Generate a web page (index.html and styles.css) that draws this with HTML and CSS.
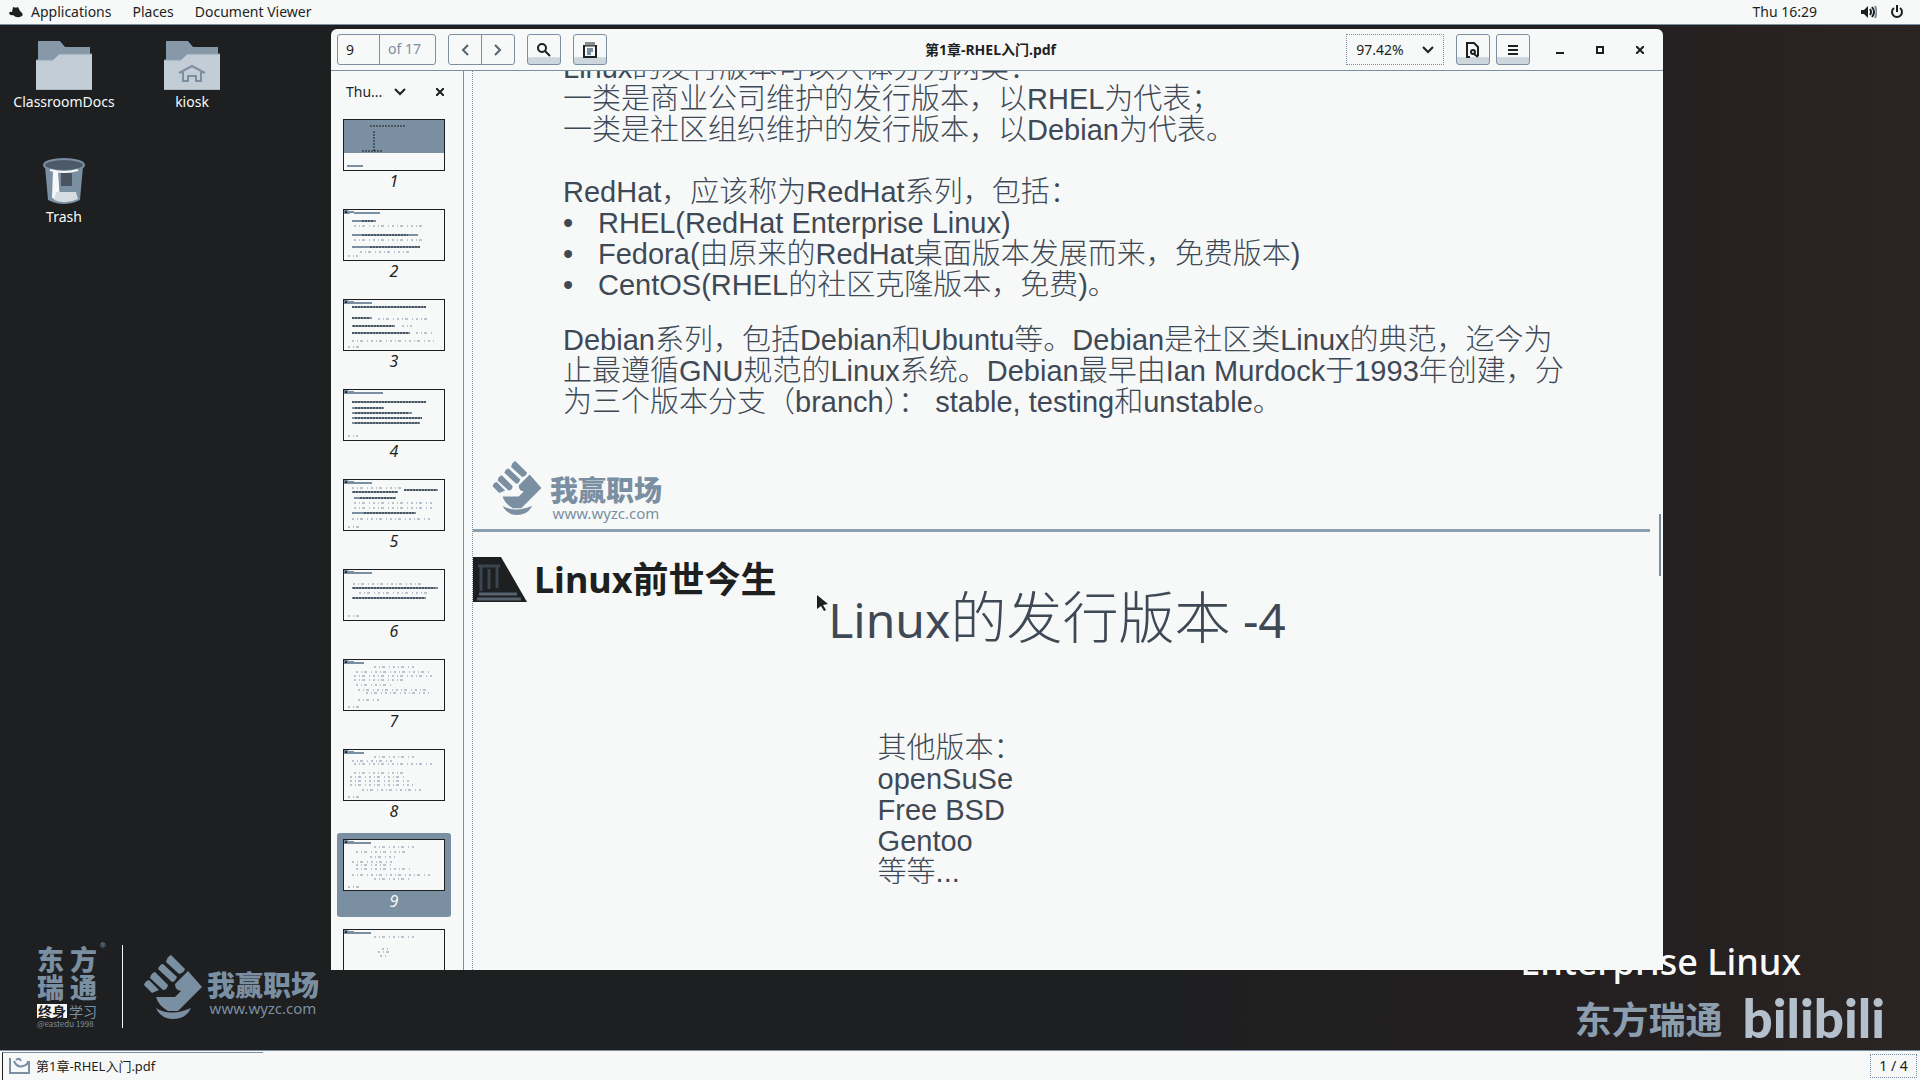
FILE: index.html
```html
<!DOCTYPE html>
<html lang="zh-CN">
<head>
<meta charset="utf-8">
<title>第1章-RHEL入门.pdf</title>
<link rel="stylesheet" href="styles.css">
</head>
<body>
<svg class="defs" aria-hidden="true">
  <symbol id="folder" viewBox="0 0 56 49">
    <path d="M2 0h22l5 6h25v16H2z" fill="#8798a9"/>
    <path d="M0 19h17l6-6h33v36H0z" fill="#c3cdd6"/>
    <path d="M0 19h17l6-6h33M0 49h56" fill="none" stroke="#8fa0b0"/>
  </symbol>
  <symbol id="fist" viewBox="0 0 58 64">
    <g fill="#7b8fa2">
      <path d="M27 0 41 14Q40 18 35 19L22 7Q23 2 27 0z"/>
      <path d="M19 9 33 22Q31 27 28 27L14 14Q16 9 19 9z"/>
      <path d="M11 17 24 30Q23 35 19 35L6 23Q7 18 11 17z"/>
      <path d="M5 25 15 35 8 38 0 30Q1 26 5 25z"/>
      <path d="M44 16 58 32 34 56H24Q14 50 12 42H31L37 36 47 29 38 36Q31 36 31 29z"/>
      <path d="M12 53Q26 62 47 53Q42 64 29 64Q17 64 12 53z"/>
    </g>
  </symbol>
  <symbol id="corner" viewBox="0 0 10 4"><path d="M0 0h3l2 4H0z" fill="#1e1f21"/><path d="M5 2h5" stroke="#7b8fa2" stroke-width="2"/></symbol>
</svg>

<header class="topbar">
  <nav class="menus">
    <svg width="16" height="14" viewBox="0 0 16 14"><path d="M1 8Q2 6 4 7L5 2Q8 3 10 2L12 6Q16 9 14 11Q9 14 5 10Q2 11 1 8z" fill="#1e1f21"/></svg>
    <button class="menu">Applications</button>
    <button class="menu">Places</button>
    <button class="menu">Document Viewer</button>
  </nav>
  <div class="status">
    <span>Thu 16:29</span>
    <button class="tray" aria-label="System">
      <svg width="16" height="14" viewBox="0 0 16 14" fill="none" stroke="#1e1f21" stroke-width="2"><path d="M0 5h3l4-4v12L3 9H0z" fill="#1e1f21" stroke="none"/><path d="M9 4q2 3 0 6M11 2q4 5 0 10"/><path d="M14 1q3 6 0 12" stroke="#7b8fa2"/></svg>
      <svg width="14" height="14" viewBox="0 0 14 14" fill="none" stroke="#1e1f21" stroke-width="2"><path d="M4 3a5 5 0 1 0 6 0M7 0v7"/></svg>
    </button>
  </div>
</header>

<main class="desktop">
  <div class="shortcuts">
    <a class="shortcut" href="#"><svg width="56" height="49"><use href="#folder"/></svg>ClassroomDocs</a>
    <a class="shortcut" href="#"><svg width="56" height="49" viewBox="0 0 56 49"><use href="#folder"/><path d="M15 32 28 25 41 32M19 31v9h5v-5h8v5h5v-9" fill="none" stroke="#7b8fa2" stroke-width="2"/></svg>kiosk</a>
    <a class="shortcut" href="#"><svg width="56" height="49" viewBox="0 0 56 49"><path d="M9 10 12 44Q28 52 44 44L47 10z" fill="#7b8fa2"/><path d="M17 15h5l2 30-8-3z" fill="#f7f9f9"/><path d="M25 17h11v13H25z" fill="#4a5460"/><path d="M20 36h20l2 7Q30 49 18 44z" fill="#d5dce2"/><ellipse cx="28" cy="9" rx="20" ry="6" fill="#4d5966" stroke="#7b8fa2" stroke-width="2"/><path d="M14 14q14 4 28 0" stroke="#f7f9f9" stroke-width="2" fill="none"/></svg>Trash</a>
  </div>

  <div class="wallpaper-name">Enterprise Linux</div>

  <section class="window">
    <div class="toolbar">
      <div class="tools">
        <div class="pager"><input class="page-no" value="9" aria-label="Page"><span class="page-of">of 17</span></div>
        <div class="pair">
          <button aria-label="Previous"><svg width="8" height="12" viewBox="0 0 8 12"><path d="M7 1 2 6l5 5"/></svg></button>
          <button aria-label="Next"><svg width="8" height="12" viewBox="0 0 8 12"><path d="M1 1l5 5-5 5"/></svg></button>
        </div>
        <button class="tool" aria-label="Find"><svg width="16" height="16" viewBox="0 0 16 16"><circle cx="6" cy="6" r="4"/><path d="M9 9l5 5"/></svg></button>
        <button class="tool" aria-label="Annotate"><svg width="14" height="16" viewBox="0 0 14 16"><path d="M1 3v12h12V3"/><path d="M1 4h12M3 0v4M5 0v4M7 0v4M9 0v4M11 0v4" stroke-width="1"/><path d="M4 6h6v4H8v3H4z" fill="#7b8fa2" stroke="none"/></svg></button>
      </div>
      <h1 class="title">第1章-RHEL入门.pdf</h1>
      <div class="tools tools-end">
        <button class="zoom">97.42%<svg width="12" height="8" viewBox="0 0 12 8"><path d="M1 1l5 5 5-5"/></svg></button>
        <div class="actions">
          <button class="tool" aria-label="Document"><svg width="14" height="16" viewBox="0 0 14 16"><path d="M4 15H1V1h7l4 4v9"/><circle cx="7" cy="10" r="2"/><path d="M8 12l4 3"/></svg></button>
          <button class="tool" aria-label="Menu"><svg width="10" height="10" viewBox="0 0 10 10"><path d="M0 1h10M0 5h10M0 9h10"/></svg></button>
        </div>
        <div class="controls">
          <button aria-label="Minimise"><svg width="8" height="8" viewBox="0 0 8 8"><path d="M0 7h8"/></svg></button>
          <button aria-label="Maximise"><svg width="8" height="8" viewBox="0 0 8 8"><path d="M1 1h6v6H1z"/></svg></button>
          <button aria-label="Close"><svg width="8" height="8" viewBox="0 0 8 8"><path d="M0 0l8 8M8 0L0 8"/></svg></button>
        </div>
      </div>
    </div>

    <div class="content">
      <aside class="sidebar">
        <div class="side-head"><button class="side-pick">Thu...<svg width="12" height="8" viewBox="0 0 12 8"><path d="M1 1l5 5 5-5"/></svg></button><button class="side-close" aria-label="Close sidebar"><svg width="8" height="8" viewBox="0 0 8 8"><path d="M0 0l8 8M8 0L0 8"/></svg></button></div>
        <ol class="thumbs">
          <li><svg class="thumb" viewBox="0 0 100 50"><path d="M0 0h100v32H0z" fill="#7b8fa2"/><path class="k" d="M30 11v21" stroke-dasharray="1 1" stroke-width="4"/><path class="k" d="M26 6h36M18 31h20" stroke-dasharray="2 7" stroke-width="1"/><path d="M3 46h16"/></svg>1</li>
          <li><svg class="thumb" viewBox="0 0 100 50"><use href="#corner" width="10" height="4"/><path d="M10 3h26M8 11h24M8 25h66M8 37h68"/><path class="k" d="M18 11h12M18 25h46M26 37h50"/><path class="f" d="M10 16h70M10 30h70M16 42h50M4 46h10"/></svg>2</li>
          <li><svg class="thumb" viewBox="0 0 100 50"><use href="#corner" width="10" height="4"/><path d="M5 3h23M8 7h74M8 18h20M8 26h43M8 33h58"/><path class="k" d="M8 7h74M8 18h18M9 26h40M8 33h56"/><path class="f" d="M34 19h50M58 26h10M72 33h18M8 41h84M4 47h12"/></svg>3</li>
          <li><svg class="thumb" viewBox="0 0 100 50"><use href="#corner" width="10" height="4"/><path d="M5 3h34M8 12h74M8 18h32M8 23h60M8 28h70M8 33h68"/><path class="k" d="M8 12h74M11 18h28M11 23h54M11 28h67M11 33h64"/><path class="f" d="M4 46h10"/></svg>4</li>
          <li><svg class="thumb" viewBox="0 0 100 50"><use href="#corner" width="10" height="4"/><path d="M5 3h23M8 12h46M60 10h34M10 18h42M8 33h64"/><path class="k" d="M60 10h32M9 12h44M16 18h35M20 33h50"/><path class="f" d="M8 8h50M10 23h80M10 28h80M8 39h78M4 47h12"/></svg>5</li>
          <li><svg class="thumb" viewBox="0 0 100 50"><use href="#corner" width="10" height="4"/><path d="M5 3h23M8 18h86M8 28h74"/><path class="k" d="M9 18h82M9 28h72"/><path class="f" d="M9 14h70M15 23h70M4 46h12"/></svg>6</li>
          <li><svg class="thumb" viewBox="0 0 100 50"><use href="#corner" width="10" height="4"/><path d="M5 3h15"/><path class="f" d="M30 7h40M12 12h74M10 16h78M10 20h50M12 25h38M14 30h72M22 33h65M14 40h22M4 47h12"/></svg>7</li>
          <li><svg class="thumb" viewBox="0 0 100 50"><use href="#corner" width="10" height="4"/><path d="M5 3h15"/><path class="f" d="M30 7h40M8 11h40M10 14h80M10 23h50M6 27h55M6 31h60M6 35h64M18 40h60M4 47h12"/></svg>8</li>
          <li class="selected"><svg class="thumb" viewBox="0 0 100 50"><use href="#corner" width="10" height="4"/><path d="M5 3h22"/><path class="f" d="M30 7h40M12 12h50M26 17h26M8 22h40M12 25h38M12 29h54M8 35h80M30 39h38M4 47h12"/></svg>9</li>
          <li><svg class="thumb" viewBox="0 0 100 50"><use href="#corner" width="10" height="4"/><path d="M5 3h22"/><path class="f" d="M30 7h40M38 19h7M34 22h12M36 26h6"/></svg></li>
        </ol>
      </aside>

      <div class="viewer">
        <article class="slide slide-top">
          <div class="prose">
            <p>Linux的发行版本可以大体分为两类：<br>一类是商业公司维护的发行版本，以RHEL为代表；<br>一类是社区组织维护的发行版本，以Debian为代表。</p>
            <p class="lead">RedHat，应该称为RedHat系列，包括：</p>
            <ul><li>RHEL(RedHat Enterprise Linux)</li><li>Fedora(由原来的RedHat桌面版本发展而来，免费版本)</li><li>CentOS(RHEL的社区克隆版本，免费)。</li></ul>
            <p>Debian系列，包括Debian和Ubuntu等。Debian是社区类Linux的典范，迄今为<br>止最遵循GNU规范的Linux系统。Debian最早由Ian Murdock于1993年创建，分<br>为三个版本分支（branch）： stable, testing和unstable。</p>
          </div>
          <div class="brand"><svg width="56" height="54" viewBox="0 0 58 64"><use href="#fist"/></svg><div class="brand-text"><b>我赢职场</b><span class="brand-url">www.wyzc.com</span></div></div>
        </article>
        <article class="slide slide-next">
          <div class="chapter"><svg width="54" height="45" viewBox="0 0 54 45"><path d="M0 0h28l26 45H0z" fill="#1e1f21"/><path d="M5 9h22M8 9v25M16 12v20M24 9v22" stroke="#3b454f" stroke-width="3"/><path d="M6 37h38M4 42h44" stroke="#56636f" stroke-width="3"/></svg><h2>Linux前世今生</h2></div>
          <h3><span class="latin">Linux</span>的发行版本<span class="latin"> -4</span></h3>
          <p class="others">其他版本：<br>openSuSe<br>Free BSD<br>Gentoo<br>等等...</p>
        </article>
        <div class="scroll-mark"></div>
        <svg class="pointer" width="12" height="17" viewBox="0 0 12 17"><path d="M0 0l11 9-5 1 3 5-2 1-3-5-4 3z" fill="#1e1f21"/></svg>
      </div>
    </div>
  </section>

  <div class="mark-left">
    <div class="seal">
      <div class="seal-name"><span>东</span><span>方</span><sup>®</sup><span>瑞</span><span>通</span></div>
      <div class="seal-sub"><b>终身</b><span>学习</span></div>
      <small>@eastedu 1998</small>
    </div>
    <div class="brand brand-dark"><svg width="58" height="64"><use href="#fist"/></svg><div class="brand-text"><b>我赢职场</b><span class="brand-url">www.wyzc.com</span></div></div>
  </div>
  <div class="mark-right"><span class="school">东方瑞通</span><b class="site">bilibili</b></div>
</main>

<footer class="taskbar">
  <button class="task"><svg width="22" height="18" viewBox="0 0 22 18" fill="none" stroke="#7b8fa2" stroke-width="2"><path d="M1 1v15h19V4"/><path d="M5 4q3 7 9 5 5-1 5-5M7 3q3-3 5 1"/></svg>第1章-RHEL入门.pdf</button>
  <button class="workspace">1 / 4</button>
</footer>
</body>
</html>
```
FILE: styles.css
```css
* { box-sizing: border-box; }
body {
  margin: 0;
  height: 100vh;
  display: flex;
  flex-direction: column;
  overflow: hidden;
  background: #1e1f21;
  color: #1e1f21;
  font: 14px/20px "Noto Sans", "Noto Sans CJK SC", sans-serif;
}
button, input { font: inherit; color: inherit; background: none; border: 0; padding: 0; margin: 0; }
button { display: flex; align-items: center; justify-content: center; }
a { color: inherit; text-decoration: none; }
svg { display: block; flex: none; }
.defs { position: absolute; width: 0; height: 0; }

.topbar {
  flex: none;
  height: 25px;
  display: flex;
  align-items: center;
  justify-content: space-between;
  padding: 0 16px 0 8px;
  background: #f7f9f9;
  border-bottom: 1px solid #7b8fa2;
}
.menus { display: flex; align-items: center; }
.menu { margin-left: 7px; }
.menu + .menu { margin-left: 21px; }
.status, .tray { display: flex; align-items: center; }
.status { gap: 44px; }
.tray { gap: 13px; }

.desktop {
  position: relative;
  flex: 1;
  min-height: 0;
  background: linear-gradient(90deg, #1e1f21 60%, #241f20 85%, #2b2423 100%);
}
.shortcuts { display: grid; grid-template-columns: 128px 128px; row-gap: 44px; padding-top: 16px; }
.shortcut { display: flex; flex-direction: column; align-items: center; gap: 2px; color: #f7f9f9; }

.wallpaper-name {
  position: absolute;
  right: 119px;
  bottom: 64px;
  color: #f7f9f9;
  font-size: 36px;
  line-height: 48px;
  font-weight: 500;
}

.window {
  position: absolute;
  top: 4px;
  right: 257px;
  bottom: 80px;
  left: 331px;
  display: flex;
  flex-direction: column;
  overflow: hidden;
  background: #f7f9f9;
  border-radius: 6px 6px 0 0;
}
.toolbar {
  flex: none;
  height: 42px;
  display: grid;
  grid-template-columns: 1fr auto 1fr;
  align-items: center;
  padding: 0 19px 0 6px;
  border-bottom: 1px solid #7b8fa2;
}
.toolbar svg, .side-head svg { fill: none; stroke: #1e1f21; stroke-width: 2; }
.tools { display: flex; gap: 12px; }
.tools-end { justify-content: flex-end; }
.pager, .pair { display: flex; height: 31px; border: 1px solid #7b8fa2; border-radius: 3px; }
.page-no { width: 41px; padding-left: 8px; }
.page-of { width: 56px; padding: 4px 0 0 8px; border-left: 1px solid #7b8fa2; color: #7b8fa2; }
.pair button { width: 32px; }
.pair button + button { width: 33px; border-left: 1px solid #7b8fa2; }
.toolbar .pair svg { stroke: #56636f; }
.tool { width: 34px; height: 31px; border: 1px solid #7b8fa2; border-radius: 3px; background: linear-gradient(#f7f9f9 75%, #cdd6dd 78%); }
.actions { display: flex; gap: 6px; }
.zoom { width: 98px; height: 31px; gap: 18px; border: 1px dotted #7b8fa2; }
.title { margin: 0; font-size: 14px; line-height: 20px; font-weight: 700; }
.controls { display: flex; gap: 32px; padding-left: 14px; }

.content { flex: 1; min-height: 0; display: flex; }
.sidebar { flex: none; width: 133px; border-right: 1px solid #7b8fa2; overflow: hidden; padding: 0 12px 0 6px; }
.side-head { display: flex; align-items: center; justify-content: space-between; height: 42px; padding: 0 7px 0 9px; }
.side-pick { gap: 12px; }
.thumbs { list-style: none; margin: 0; padding: 0; display: flex; flex-direction: column; gap: 6px; }
.thumbs li { height: 84px; padding: 6px 0 0; display: flex; flex-direction: column; align-items: center; font-size: 16px; line-height: 20px; font-style: italic; border-radius: 3px; }
.thumbs .selected { background: #7b8fa2; color: #f7f9f9; }
.thumb { width: 102px; height: 52px; background: #f7f9f9; border: 1px solid #1e1f21; fill: none; stroke: #7b8fa2; stroke-width: 2; }
.thumb .k { stroke: #1e1f21; stroke-dasharray: 2 1; stroke-width: 1; }
.thumb .f { stroke-width: 1; stroke-dasharray: 2 3 1 2 3 4 1 3; }

.viewer { position: relative; flex: 1; min-width: 0; overflow: hidden; margin-left: 8px; border-left: 1px dotted #7b8fa2; color: #3f4955; }
.slide-top { display: flow-root; margin-right: 13px; height: 461px; border-bottom: 3px solid #8ea0b0; }
.prose, .others { font: 300 29px/31px "Liberation Sans", "Noto Sans CJK SC", sans-serif; white-space: nowrap; }
.prose { padding-left: 90px; margin-top: -18px; }
.prose p, .prose ul { margin: 0; }
.prose .lead { margin-top: 31px; }
.prose ul { padding: 0; list-style: none; margin-bottom: 24px; }
.prose li { display: flex; }
.prose li::before { content: "•"; width: 35px; }
.brand { display: flex; align-items: flex-start; gap: 5px; color: #7b8fa2; }
.brand-text { display: flex; flex-direction: column; align-items: center; padding-top: 12px; }
.brand-text b { font-size: 28px; line-height: 32px; font-weight: 900; font-family: "Noto Sans CJK SC", sans-serif; }
.brand-url { font-size: 15px; line-height: 16px; }
.slide-top .brand { padding: 43px 0 0 16px; }

.slide-next { padding-top: 25px; }
.chapter { display: flex; align-items: center; gap: 7px; }
.chapter h2 { margin: 0; color: #1e1f21; font-size: 36px; line-height: 44px; font-weight: 700; }
.slide-next h3 { margin: -20px 22px 0 0; text-align: center; font-size: 56px; line-height: 64px; font-weight: 300; font-family: "Noto Sans CJK SC", sans-serif; }
.latin { font: 400 48px/64px "Noto Sans", sans-serif; white-space: pre; }
.others { width: 32%; margin: 81px auto 0; }
.scroll-mark { position: absolute; top: 443px; right: 2px; width: 2px; height: 62px; background: #7b8fa2; }
.pointer { position: absolute; top: 524px; left: 344px; }

.mark-left { position: absolute; left: 37px; bottom: 22px; display: flex; align-items: center; color: #7b8fa2; }
.seal { width: 86px; height: 83px; border-right: 1px solid #f7f9f9; font-family: "Noto Sans CJK SC", sans-serif; }
.seal-name { position: relative; display: grid; grid-template-columns: 33px 33px; font-size: 27px; line-height: 28px; font-weight: 900; }
.seal-name sup { position: absolute; top: -8px; left: 63px; font-size: 12px; line-height: 20px; font-weight: 400; }
.seal-sub { display: flex; gap: 2px; padding-top: 3px; font-size: 14px; line-height: 14px; }
.seal-sub b { padding: 0 1px; color: #1e1f21; background: #f7f9f9; }
.seal small { display: block; padding-top: 1px; font-size: 8px; line-height: 9px; }
.brand-dark { padding-left: 21px; }
.brand-dark .brand-text { padding-top: 13px; }

.mark-right { position: absolute; right: 35px; bottom: 0; display: flex; align-items: center; gap: 20px; line-height: 64px; }
.school { color: #8c9eae; font-size: 37px; font-weight: 700; font-family: "Noto Sans CJK SC", sans-serif; }
.site { color: #b4c0cb; font-size: 53px; font-weight: 900; font-family: "Lato", sans-serif; }

.taskbar { flex: none; height: 30px; display: flex; align-items: center; justify-content: space-between; padding: 0 3px 0 2px; background: #f7f9f9; border-top: 1px solid #7b8fa2; }
.task { width: 261px; height: 28px; justify-content: flex-start; gap: 5px; padding-left: 6px; border-top: 1px solid #7b8fa2; border-left: 1px solid #1e1f21; font-size: 13px; }
.workspace { width: 47px; height: 24px; border: 1px dotted #7b8fa2; }
```
